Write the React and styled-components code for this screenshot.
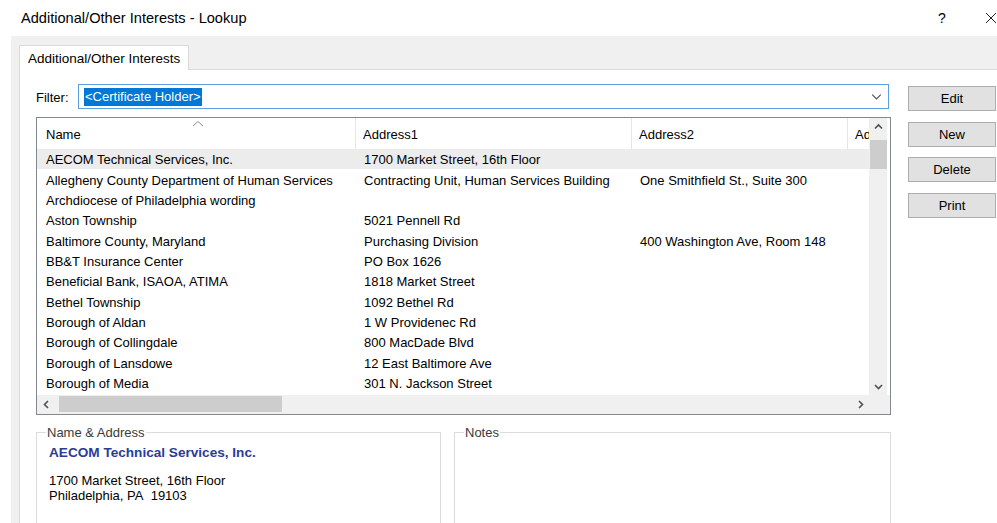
import { createGlobalStyle, styled } from 'styled-components'

// base ///////////////////////////
const GlobalStyle = createGlobalStyle`
  html, body {
    margin: 0;
    padding: 0;
    background: #ffffff;
    overflow: hidden;
  }
  body {
    font-family: "Liberation Sans", Arial, sans-serif;
    font-size: 13px;
    color: #000000;
  }
`

// style///////////////////////////
const Dialog = styled.div`
  width: 997px;
  height: 523px;
  display: flex;
  flex-direction: column;
  overflow: hidden;
`

const TitleBar = styled.div`
  height: 36px;
  flex-shrink: 0;
  display: flex;
  align-items: center;
  padding-left: 21px;
  font-size: 14.6px;
  color: #000;

  .title {
    flex: 1;
  }
  .help {
    width: 14px;
    margin-right: 33px;
    font-size: 14px;
  }
  .close {
    width: 14px;
    margin-right: -2px;
    display: flex;
  }
`

const Client = styled.div`
  flex: 1;
  margin-left: 11px;
  background: #f0f0f0;
  padding: 9px 0 0 8px;
  display: flex;
  flex-direction: column;
`

const TabStrip = styled.div`
  display: flex;
  height: 24px;
  flex-shrink: 0;
`

const Tab = styled.div`
  background: #ffffff;
  border: 1px solid #d9d9d9;
  border-bottom: none;
  padding: 0 8px;
  display: flex;
  align-items: center;
  box-sizing: border-box;
  font-size: 13.5px;
  color: #000;
  position: relative;
  z-index: 1;
  margin-bottom: -1px;
  height: 25px;
`

const TabPanel = styled.div`
  flex: 1;
  background: #ffffff;
  border: 1px solid #d9d9d9;
  border-right: none;
  border-bottom: none;
  display: flex;
  gap: 17px;
  padding: 14px 0 0 16px;
`

const MainColumn = styled.div`
  width: 855px;
  display: flex;
  flex-direction: column;
`

const FilterRow = styled.div`
  display: flex;
  align-items: center;
  justify-content: space-between;
  padding-right: 2px;
  height: 25px;

  label {
    color: #000;
    margin-top: 1px;
  }
`

const Combo = styled.div`
  width: 811px;
  height: 25px;
  box-sizing: border-box;
  border: 1px solid #5a9fe0;
  display: flex;
  align-items: center;
  padding: 0 6px 0 5px;

  .value {
    flex: 1;
  }
  .value span {
    background: #0078d7;
    color: #ffffff;
    padding: 1px 1px 2px;
  }
  svg {
    display: block;
  }
`

const ListView = styled.div`
  margin-top: 8px;
  height: 298px;
  box-sizing: border-box;
  border: 1px solid #828790;
  display: grid;
  grid-template-columns: 1fr 21px;
  grid-template-rows: 1fr 19px;
  overflow: hidden;
`

const ListBody = styled.div`
  overflow: hidden;
  display: flex;
  flex-direction: column;
`

const HeaderRow = styled.div`
  height: 31px;
  flex-shrink: 0;
  display: flex;
  position: relative;
`

const HeaderCell = styled.div`
  width: ${(p) => p.$w}px;
  flex-shrink: 0;
  box-sizing: border-box;
  padding-left: ${(p) => p.$pad || 7}px;
  padding-top: 9px;
  border-right: 1px solid #e5e5e5;
  white-space: nowrap;
  overflow: hidden;
  position: relative;
`

const SortArrow = styled.svg`
  position: absolute;
  left: 155px;
  top: 2px;
`

const Row = styled.div`
  height: 20.36px;
  display: flex;
  align-items: center;
  background: ${(p) => (p.$selected ? '#ececec' : 'transparent')};
  white-space: nowrap;
`

const Cell = styled.div`
  width: ${(p) => p.$w}px;
  flex-shrink: 0;
  box-sizing: border-box;
  padding-left: ${(p) => p.$pad || 8}px;
  overflow: hidden;
  margin-top: 1px;
`

const VScroll = styled.div`
  display: flex;
  flex-direction: column;
  align-items: center;
  padding-right: 3px;
  background: linear-gradient(to right, #f0f0f0 18px, #ffffff 18px);
`

const ScrollBtn = styled.div`
  height: 17px;
  width: 18px;
  display: flex;
  align-items: center;
  justify-content: center;
  flex-shrink: 0;
`

const VThumb = styled.div`
  width: 17px;
  height: 29px;
  background: #cdcdcd;
  margin-top: 5px;
  flex-shrink: 0;
`

const VTrack = styled.div`
  flex: 1;
`

const HScroll = styled.div`
  background: #f0f0f0;
  display: flex;
  align-items: center;
  padding-bottom: 1px;
`

const HThumb = styled.div`
  width: 223px;
  height: 16px;
  background: #cdcdcd;
  margin-left: 4px;
`

const HTrack = styled.div`
  flex: 1;
`

const Corner = styled.div`
  background: #f0f0f0;
`

const Groups = styled.div`
  display: flex;
  gap: 13px;
  margin-top: 10px;
`

const GroupBox = styled.fieldset`
  margin: 0;
  width: ${(p) => p.$w}px;
  height: 120px;
  box-sizing: border-box;
  border: 1px solid #dcdcdc;
  border-bottom: none;
  padding: 0 12px;

  legend {
    padding: 0 1px;
    margin-left: -3px;
    color: #3a3a3a;
  }
`

const CompanyName = styled.div`
  font-weight: bold;
  color: #2a3c96;
  font-size: 13.6px;
  margin-top: 5px;
  margin-bottom: 13px;
`

const AddressLine = styled.div`
  line-height: 15px;
`

const ButtonColumn = styled.div`
  display: flex;
  flex-direction: column;
  gap: 10.5px;
  padding-top: 2px;
`

const DlgButton = styled.div`
  width: 88px;
  height: 25px;
  box-sizing: border-box;
  background: #e1e1e1;
  border: 1px solid #adadad;
  display: flex;
  align-items: center;
  justify-content: center;
  color: #000;
`

// data//////////////////////////
const columns = [
  { key: 'name', title: 'Name', w: 319, pad: 9 },
  { key: 'a1', title: 'Address1', w: 276 },
  { key: 'a2', title: 'Address2', w: 216 },
  { key: 'a3', title: 'Address3', w: 120 },
]

const rows = [
  { name: 'AECOM Technical Services, Inc.', a1: '1700 Market Street, 16th Floor', a2: '' },
  { name: 'Allegheny County Department of Human Services', a1: 'Contracting Unit, Human Services Building', a2: 'One Smithfield St., Suite 300' },
  { name: 'Archdiocese of Philadelphia wording', a1: '', a2: '' },
  { name: 'Aston Township', a1: '5021 Pennell Rd', a2: '' },
  { name: 'Baltimore County, Maryland', a1: 'Purchasing Division', a2: '400 Washington Ave, Room 148' },
  { name: 'BB&T Insurance Center', a1: 'PO Box 1626', a2: '' },
  { name: 'Beneficial Bank, ISAOA, ATIMA', a1: '1818 Market Street', a2: '' },
  { name: 'Bethel Township', a1: '1092 Bethel Rd', a2: '' },
  { name: 'Borough of Aldan', a1: '1 W Providenec Rd', a2: '' },
  { name: 'Borough of Collingdale', a1: '800 MacDade Blvd', a2: '' },
  { name: 'Borough of Lansdowe', a1: '12 East Baltimore Ave', a2: '' },
  { name: 'Borough of Media', a1: '301 N. Jackson Street', a2: '' },
]

// small arrow glyphs
const Chevron = ({ dir = 'down', size = 9, color = '#606060', width = 1.3 }) => {
  const paths = {
    down: 'M1 3 L4.5 6.5 L8 3',
    up: 'M1 6.5 L4.5 3 L8 6.5',
    left: 'M6 1 L2.5 4.5 L6 8',
    right: 'M3 1 L6.5 4.5 L3 8',
  }
  return (
    <svg width={size} height={size} viewBox="0 0 9 9">
      <path d={paths[dir]} fill="none" stroke={color} strokeWidth={width} />
    </svg>
  )
}

function App() {
  return (
    <>
      <GlobalStyle />
      <Dialog>
        <TitleBar>
          <span className="title">Additional/Other Interests - Lookup</span>
          <span className="help">?</span>
          <span className="close">
            <svg width="12" height="12" viewBox="0 0 12 12">
              <path d="M1 1 L11 11 M11 1 L1 11" stroke="#222" strokeWidth="1" />
            </svg>
          </span>
        </TitleBar>

        <Client>
          <TabStrip>
            <Tab>Additional/Other Interests</Tab>
          </TabStrip>

          <TabPanel>
            <MainColumn>
              <FilterRow>
                <label>Filter:</label>
                <Combo>
                  <div className="value">
                    <span>&lt;Certificate Holder&gt;</span>
                  </div>
                  <Chevron dir="down" size={11} color="#555" width={1} />
                </Combo>
              </FilterRow>

              <ListView>
                <ListBody>
                  <HeaderRow>
                    {columns.map((c) => (
                      <HeaderCell key={c.key} $w={c.w} $pad={c.pad}>
                        {c.title}
                      </HeaderCell>
                    ))}
                    <SortArrow width="12" height="7" viewBox="0 0 12 7">
                      <path d="M1 6 L6 1.5 L11 6" fill="none" stroke="#8a8a8a" strokeWidth="1" />
                    </SortArrow>
                  </HeaderRow>
                  {rows.map((r, i) => (
                    <Row key={r.name} $selected={i === 0}>
                      {columns.map((c) => (
                        <Cell key={c.key} $w={c.w} $pad={c.pad}>
                          {r[c.key] || ''}
                        </Cell>
                      ))}
                    </Row>
                  ))}
                </ListBody>

                <VScroll>
                  <ScrollBtn>
                    <Chevron dir="up" size={9} color="#505050" width={1.6} />
                  </ScrollBtn>
                  <VThumb />
                  <VTrack />
                  <ScrollBtn>
                    <Chevron dir="down" size={9} color="#505050" width={1.6} />
                  </ScrollBtn>
                </VScroll>

                <HScroll>
                  <ScrollBtn>
                    <Chevron dir="left" size={9} color="#505050" width={1.6} />
                  </ScrollBtn>
                  <HThumb />
                  <HTrack />
                  <ScrollBtn>
                    <Chevron dir="right" size={9} color="#505050" width={1.6} />
                  </ScrollBtn>
                </HScroll>
                <Corner />
              </ListView>

              <Groups>
                <GroupBox $w={405}>
                  <legend>Name &amp; Address</legend>
                  <CompanyName>AECOM Technical Services, Inc.</CompanyName>
                  <AddressLine>1700 Market Street, 16th Floor</AddressLine>
                  <AddressLine>Philadelphia, PA&nbsp;&nbsp;19103</AddressLine>
                </GroupBox>
                <GroupBox $w={437}>
                  <legend>Notes</legend>
                </GroupBox>
              </Groups>
            </MainColumn>

            <ButtonColumn>
              <DlgButton>Edit</DlgButton>
              <DlgButton>New</DlgButton>
              <DlgButton>Delete</DlgButton>
              <DlgButton>Print</DlgButton>
            </ButtonColumn>
          </TabPanel>
        </Client>
      </Dialog>
    </>
  )
}

export default App
